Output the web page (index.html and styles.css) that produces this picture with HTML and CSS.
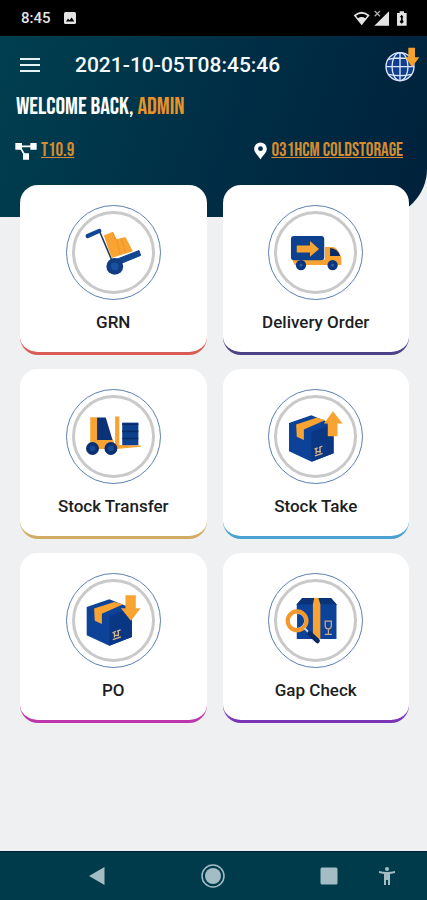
FILE: index.html
```html
<!DOCTYPE html>
<html lang="en">
<head>
<meta charset="utf-8">
<meta name="viewport" content="width=device-width, initial-scale=1">
<title>Warehouse</title>
<link rel="stylesheet" href="styles.css">
</head>
<body>
<div class="status">
  <span class="status-time">8:45</span>
  <svg class="status-photo" viewBox="0 0 12 12"><rect width="12" height="12" rx="1.5" fill="#e4e4e4"/><path d="M2 9.5 4 6.5 5.5 8.2 7.7 5.5 10.3 9.5Z" fill="#000"/></svg>
  <div class="status-right">
    <svg width="54" height="18" viewBox="420 25 162 54">
      <path d="M422 44Q446 22 470 44L446 74Z" fill="#e4e4e4"/><path d="M429 45Q446 33 463 45L457 53Q446 45 435 53Z" fill="#000"/>
      <path d="M528 32V75H484Z" fill="#e4e4e4"/><path d="M485 31 501 47M501 31 485 47" stroke="#aaa" stroke-width="4"/>
      <path d="M552 37H560V32H573V37H581V75H552Z" fill="#e4e4e4"/><path d="M566 42 572 50 569 50V57L572 64 566 69 560 64 564 57V50H560Z" fill="#000"/>
    </svg>
  </div>
</div>
<header class="header">
  <div class="toolbar">
    <button class="icon-button menu" type="button" aria-label="Menu"><svg width="20" height="16" viewBox="0 0 20 16"><path d="M0 2H20M0 8H20M0 14H20" stroke="#e6f3f5" stroke-width="2"/></svg></button>
    <h1 class="title">2021-10-05T08:45:46</h1>
    <button class="icon-button globe" type="button" aria-label="Download">
      <svg width="38" height="38" viewBox="510 138 114 114">
        <circle cx="561" cy="200" r="43" fill="#113f8c"/>
        <g fill="none" stroke="#dce8fa" stroke-width="4"><circle cx="561" cy="200" r="42"/><ellipse cx="561" cy="200" rx="24" ry="42"/><path d="M561 158V242M519 200H603M526 178Q561 170 596 178M526 223Q561 231 596 223"/></g>
        <path d="M586 143H606V172H619L597 201 577 172H586Z" fill="#f6a12e"/>
      </svg>
    </button>
  </div>
  <p class="welcome">WELCOME BACK, <span class="accent">ADMIN</span></p>
  <div class="places">
    <a class="place" href="#version">
      <svg width="22" height="18" viewBox="45 421 66 54"><path d="M57 434H98M60 436 77 465" stroke="#fff" stroke-width="5"/><path d="M46 424H66V444H46ZM91 424H110V444H91ZM69 455H87V474H69Z" fill="#fff"/></svg>
      <span class="place-text">T10.9</span>
    </a>
    <a class="place" href="#location">
      <svg width="13" height="18" viewBox="0 0 13 18"><path fill-rule="evenodd" d="M6.5 0.5A6.3 6.3 0 0 0 .2 6.8C.2 10.5 3 12 6.5 17.5 10 12 12.8 10.500 12.800 6.800A6.300 6.300 0 0 0 6.500 .5ZM6.500 4.300A2.400 2.400 0 1 1 6.500 9.100 2.400 2.400 0 0 1 6.500 4.300Z" fill="#fff"/></svg>
      <span class="place-text">031HCM COLDSTORAGE</span>
    </a>
  </div>
</header>
<main class="cards">
  <a class="card red" href="#grn">
    <span class="ring"><svg viewBox="165 90 288 288">
      <path d="M229 183 265 167" stroke="#124592" stroke-width="13" stroke-linecap="round"/><path d="M266 169 306 263" stroke="#203d62" stroke-width="5"/>
      <path d="M279 181 307 170 319 193 346 186 369 230 303 251Z" fill="#f9a332"/><path d="M319 193 329 239M332 190 347 234M307 172 314 193" stroke="#ea9429" stroke-width="3"/>
      <path d="M316 256 388 228 393 243 327 270Z" fill="#124592" stroke="#124592" stroke-width="3"/><circle cx="313" cy="277" r="26" fill="#103c83"/><circle cx="313" cy="277" r="12" fill="#17519f"/>
    </svg></span>
    <span class="label">GRN</span>
  </a>
  <a class="card indigo" href="#delivery">
    <span class="ring"><svg viewBox="160 90 288 288">
      <path d="M232 256H333V217H358Q376 222 384 250V273H240Z" fill="#f9a332"/><rect x="228" y="183" width="103" height="75" rx="9" fill="#0d418d"/>
      <path d="M246 212H287V198L315 223 287 247V234H246Z" fill="#f9a332"/><path d="M349 220Q374 222 380 245H349Z" fill="#0c2c66"/>
      <circle cx="259" cy="273" r="16" fill="#0c367d"/><circle cx="357" cy="273" r="16" fill="#0c367d"/>
      <circle cx="259" cy="273" r="5" fill="#2b5da3"/><circle cx="357" cy="273" r="5" fill="#2b5da3"/>
    </svg></span>
    <span class="label">Delivery Order</span>
  </a>
  <a class="card gold" href="#transfer">
    <span class="ring"><svg viewBox="165 87 288 288">
      <path d="M237 171H259V239H306L314 257V169H327V257L394 259V263L318 270H237Z" fill="#f9a332"/><path d="M258 172H285L306 242H258Z" fill="#0b3276"/>
      <path d="M336 188H386V258H336Z" fill="#0d418d"/><path d="M336 193H386M336 215H386M336 237H386" stroke="#092c69" stroke-width="5"/>
      <circle cx="244" cy="268" r="20" fill="#0b2f70"/><circle cx="301" cy="268" r="20" fill="#0b2f70"/><circle cx="244" cy="268" r="9" fill="#164994"/><circle cx="301" cy="268" r="9" fill="#164994"/>
    </svg></span>
    <span class="label">Stock Transfer</span>
  </a>
  <a class="card blue" href="#take">
    <span class="ring"><svg viewBox="160 87 288 288">
      <path d="M222 189 291 165 360 193 360 283 292 309 222 277Z" fill="#0c4298"/><path d="M292 216 360 193V283L292 309Z" fill="#0a3783"/>
      <path d="M244 194 307 173 335 180 268 209V242L246 232Z" fill="#f9a332"/><path d="M358 153 388 191H372V230H342V191H330Z" fill="#f9a332"/>
      <path d="M302 291 326 283M306 267V285M318 263V281M301 270 311 266M315 265 325 261M306 278H321" stroke="#ddb589" stroke-width="4" fill="none"/>
    </svg></span>
    <span class="label">Stock Take</span>
  </a>
  <a class="card magenta" href="#po">
    <span class="ring"><svg viewBox="165 84 288 288">
      <path d="M226 186 296 162 366 190V279L296 306 226 274Z" fill="#0c4298"/><path d="M296 213 366 190V279L296 306Z" fill="#0a3783"/>
      <path d="M249 191 311 171 339 178 273 207V239L251 229Z" fill="#f9a332"/><path d="M346 150H378V190H393L363 229 332 190H346Z" fill="#f9a332"/>
      <path d="M307 287 332 279M312 263V281M324 259V277M306 266 317 262M320 261 331 257M312 274H326" stroke="#ddb589" stroke-width="4" fill="none"/>
    </svg></span>
    <span class="label">PO</span>
  </a>
  <a class="card violet" href="#gap">
    <span class="ring"><svg viewBox="160 84 288 288">
      <path d="M263 158H352L369 178V285H246V178Z" fill="#0c4298"/><path d="M263 158H352L369 178H246Z" fill="#0a3276"/><path d="M300 158H313L319 178V285H296V178Z" fill="#f9a332"/>
      <path d="M334 230H353V243Q353 254 344 254 334 254 334 243ZM344 254V271M333 271H355" fill="none" stroke="#c7a98d" stroke-width="4"/>
      <circle cx="247" cy="229" r="29" fill="#fff" stroke="#f3982a" stroke-width="13"/><path d="M247 207A22 22 0 0 1 247 251Z" fill="#0c4298"/>
      <path d="M270 252 284 266" stroke="#c6d5e4" stroke-width="6"/><path d="M286 268 310 291" stroke="#082b65" stroke-width="15" stroke-linecap="round"/>
    </svg></span>
    <span class="label">Gap Check</span>
  </a>
</main>
<nav class="navbar" aria-label="System">
  <button class="icon-button" type="button" aria-label="Back"><svg width="24" height="24" viewBox="0 0 24 24"><path d="M4 12 19.500 3V21Z" fill="#a4bdc5"/></svg></button>
  <button class="icon-button" type="button" aria-label="Home"><svg width="24" height="24" viewBox="0 0 24 24"><circle cx="12" cy="12" r="11" fill="none" stroke="#a4bdc5" stroke-width="1.500"/><circle cx="12" cy="12" r="8" fill="#a4bdc5"/></svg></button>
  <button class="icon-button" type="button" aria-label="Recent apps"><svg width="24" height="24" viewBox="0 0 24 24"><rect x="3.500" y="3.500" width="17" height="17" rx="1.500" fill="#a4bdc5"/></svg></button>
  <button class="icon-button" type="button" aria-label="Accessibility"><svg width="24" height="24" viewBox="0 0 24 24"><circle cx="12" cy="5" r="2" fill="#a4bdc5"/><path d="M4 7Q12 9 20 7V9L15 10V21H13V16H11V21H9V10L4 9Z" fill="#a4bdc5"/></svg></button>
</nav>
</body>
</html>
```
FILE: styles.css
```css
* { box-sizing: border-box; }
body {
  margin: 0;
  min-height: 100vh;
  display: flex;
  flex-direction: column;
  background: #eef0f2;
  color: #1d1e22;
  font-family: Roboto, "Liberation Sans", sans-serif;
}
svg { display: block; }
a { color: inherit; text-decoration: none; }
.icon-button {
  display: block;
  padding: 0;
  border: 0;
  background: none;
}
.status {
  display: flex;
  align-items: center;
  gap: 13px;
  height: 36px;
  padding: 0 20px 0 21px;
  background: #000;
  color: #e4e4e4;
}
.status-time { font-size: 15px; font-weight: 500; }
.status-photo { width: 12px; height: 12px; }
.status-right { margin-left: auto; }
.header {
  padding-bottom: 54px;
  border-bottom-right-radius: 48px;
  background: linear-gradient(110deg, #003f50, #002d45 55%, #00213b);
}
.toolbar {
  display: flex;
  align-items: center;
  height: 58px;
  padding: 0 6px 0 20px;
}
.title {
  flex: 1;
  margin: 0 0 0 35px;
  color: #f4fafb;
  font-size: 21px;
  font-weight: 500;
}
.welcome, .place-text {
  font-family: "Bebas Neue", "Roboto Condensed", "Liberation Sans Narrow", "Liberation Sans", sans-serif;
  font-weight: 400;
  white-space: nowrap;
}
.welcome {
  margin: 0;
  padding: 0 16px;
  color: #fff;
  font-size: 24px;
  line-height: 26px;
}
.accent { color: #e8922a; }
.places {
  display: flex;
  justify-content: space-between;
  margin-top: 19px;
  padding: 0 24px 0 15px;
}
.place {
  display: flex;
  align-items: center;
  gap: 4px;
  height: 24px;
}
.place-text {
  color: #d48c32;
  font-size: 19px;
  line-height: 24px;
  text-decoration: underline;
  text-decoration-thickness: 1px;
  text-underline-offset: 1px;
}
.cards {
  flex: 1;
  display: grid;
  grid-template-columns: 1fr 1fr;
  align-content: start;
  gap: 14px 16px;
  margin-top: -32px;
  padding: 0 18px 24px 20px;
}
.card {
  display: flex;
  flex-direction: column;
  align-items: center;
  gap: 10px;
  padding: 20px 8px 18px;
  border-bottom: 3px solid;
  border-radius: 18px;
  background: #fff;
}
.ring {
  position: relative;
  width: 95px;
  height: 95px;
  border: 1px solid #5c7fb0;
  border-radius: 50%;
}
.ring::before {
  content: "";
  position: absolute;
  inset: 5px;
  border: 3px solid #c9c9c9;
  border-radius: 50%;
}
.ring svg { position: relative; }
.label {
  color: #1d1e22;
  font-size: 17px;
  font-weight: 500;
  line-height: 24px;
}
.red { border-color: #d95c56; }
.indigo { border-color: #4c4288; }
.gold { border-color: #d2ac62; }
.blue { border-color: #4aa2d0; }
.magenta { border-color: #bd36ac; }
.violet { border-color: #7933b5; }
.navbar {
  display: grid;
  grid-template-columns: 2fr 2fr 1fr auto;
  align-items: center;
  height: 49px;
  padding: 0 28px 0 85px;
  border-top: 1px solid #001f37;
  background: #003b4c;
}
```
